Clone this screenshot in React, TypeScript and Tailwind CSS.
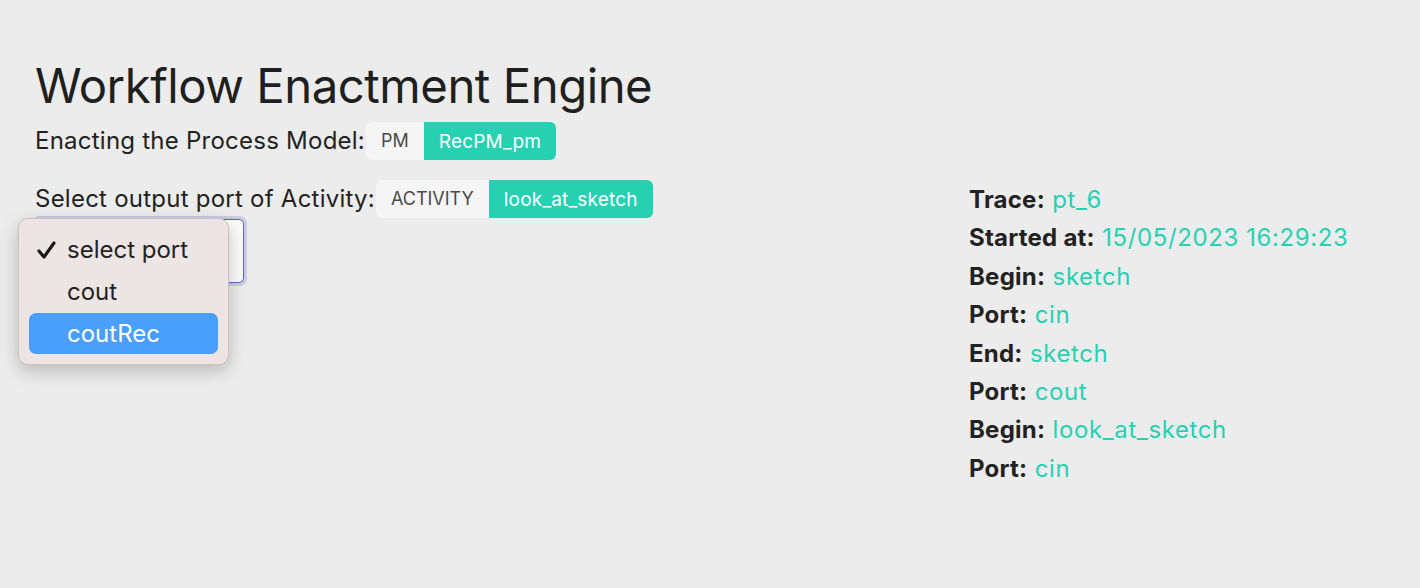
const trace: [string, string][] = [
  ["Trace:", "pt_6"],
  ["Started at:", "15/05/2023 16:29:23"],
  ["Begin:", "sketch"],
  ["Port:", "cin"],
  ["End:", "sketch"],
  ["Port:", "cout"],
  ["Begin:", "look_at_sketch"],
  ["Port:", "cin"],
];

const TagPair: React.FC<{ label: string; value: string; upper?: boolean }> = ({ label, value, upper }) => {
  return (
    <span className="inline-flex h-[38px] items-stretch leading-none tracking-normal">
      <span
        className={`flex items-center rounded-l-[6px] bg-[#f5f5f5] px-[15px] text-[18px] text-[#4a4a4a] ${upper ? "uppercase" : ""}`}
      >
        {label}
      </span>
      <span className="flex items-center rounded-r-[6px] bg-[#26d1b2] px-[15px] text-[19px] tracking-[0.01em] text-white">
        {value}
      </span>
    </span>
  );
};

export default function App() {
  return (
    <div className="relative h-[588px] w-full overflow-hidden bg-[#ececec] font-['Inter',sans-serif] text-[#222]">
      <div className="px-[35px] pt-[54px]">
        <h1 className="text-[47.3px] leading-[64px] font-normal tracking-[-0.01em] text-[#1f1f1f]">
          Workflow Enactment Engine
        </h1>

        <div className="mt-[4px] flex items-center gap-[1px] text-[24px] tracking-[0.01em]">
          <span>Enacting the Process Model:</span>
          <TagPair label="PM" value="RecPM_pm" />
        </div>

        <div className="mt-[20px] flex">
          <div className="w-[934px] shrink-0">
            <div className="flex items-center gap-[1px] text-[24px] tracking-[0.01em]">
              <span>Select output port of Activity:</span>
              <TagPair label="ACTIVITY" value="look_at_sketch" upper />
            </div>
            <div className="mt-[1px] h-[64px] w-[209px] rounded-[5px] border border-[#5a67c8] bg-[#fbfbfb] shadow-[0_0_0_3px_rgba(90,103,200,0.25)]" />
          </div>

          <div className="pt-[1px] text-[24px] leading-[38.4px] tracking-[0.025em]">
            {trace.map(([k, v], i) => (
              <div key={i}>
                <span className="font-bold tracking-[0.01em]">{k}</span> <span className="text-[#26d1b2]">{v}</span>
              </div>
            ))}
          </div>
        </div>
      </div>

      <div className="absolute top-[218px] left-[18px] w-[211px] rounded-[10px] border border-[#c8c2c0] bg-[#ede5e3] px-[10px] py-[10px] text-[24px] shadow-[0_6px_18px_rgba(0,0,0,0.22)]">
        <div className="flex h-[42px] items-center">
          <span className="w-[38px] pl-[8px]">
            <svg width="19" height="18" viewBox="0 0 19 18" fill="none">
              <path d="M2 10 L7 16 L17 2" stroke="#1a1a1a" strokeWidth="3.2" strokeLinecap="round" strokeLinejoin="round" />
            </svg>
          </span>
          <span>select port</span>
        </div>
        <div className="flex h-[42px] items-center">
          <span className="w-[38px]" />
          <span>cout</span>
        </div>
        <div className="flex h-[41px] items-center rounded-[7px] bg-[#4a9efd] text-white">
          <span className="w-[38px]" />
          <span>coutRec</span>
        </div>
      </div>
    </div>
  );
}
